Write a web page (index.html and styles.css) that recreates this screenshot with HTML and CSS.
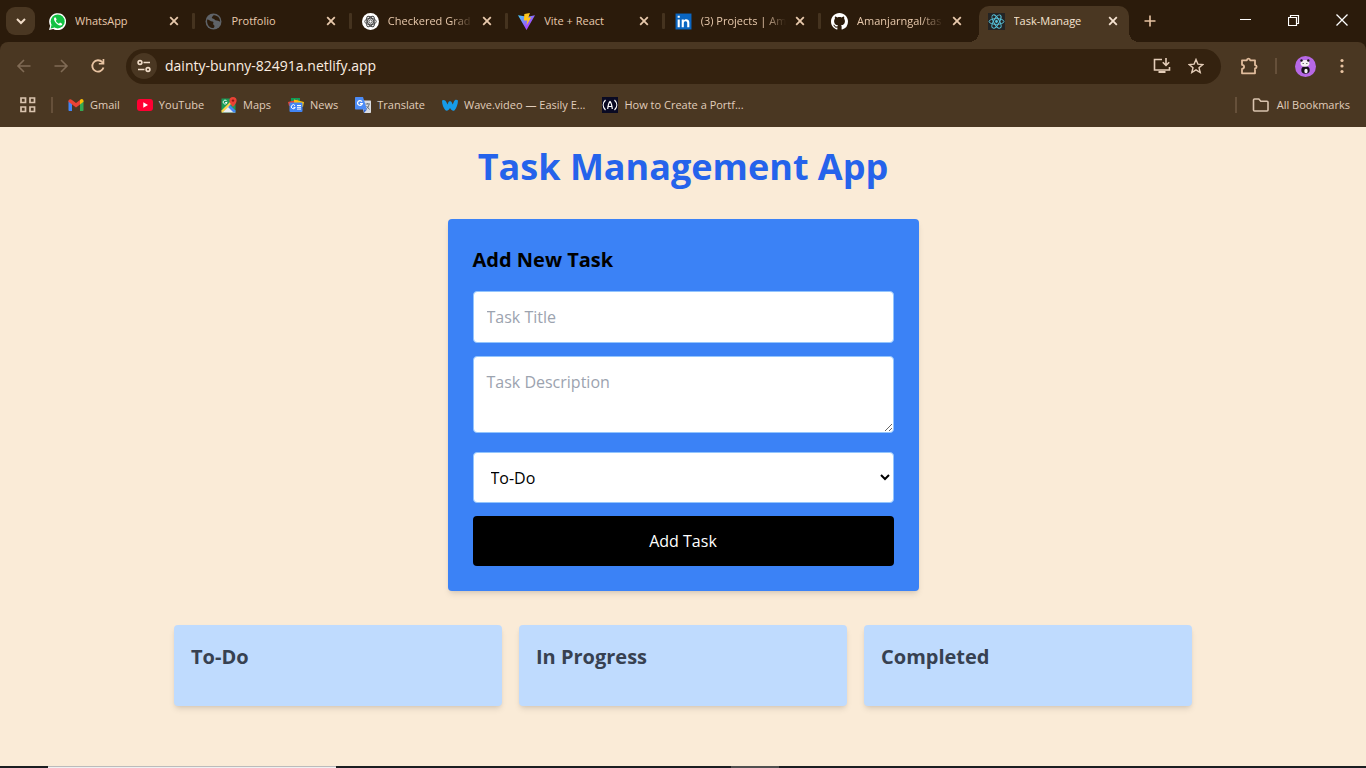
FILE: index.html
```html
<!DOCTYPE html>
<html lang="en">
<head>
<meta charset="utf-8">
<title>Task-Manage</title>
<link rel="stylesheet" href="styles.css">
</head>
<body>
<svg class="defs" aria-hidden="true">
  <symbol id="x" viewBox="0 0 16 16"><path d="M4.2 4.2l7.6 7.6M11.8 4.2l-7.6 7.6" fill="none" stroke="currentColor" stroke-width="1.8"/></symbol>
</svg>
<header class="browser">
  <div class="strip">
    <button class="tab-search" aria-label="Search tabs"><svg width="12" height="12" viewBox="0 0 12 12"><path d="M2 4l4 4 4-4" fill="none" stroke="#f0dcc8" stroke-width="2"/></svg></button>
    <ul class="tabs">
      <li class="tab">
        <svg class="fav" viewBox="0 0 16 16"><path d="M0 16l1.100-4A8 8 0 1 1 4 15z" fill="#fff"/><circle cx="8.200" cy="7.900" r="6.600" fill="#12c143"/><path d="M1.500 14.500l1-3.700 2.700 2.900z" fill="#12c143"/><path d="M5.200 4.200c-2 2 2.500 8 5.800 7.600 1.400-.3 1.600-1.300 1.300-1.800l-1.900-1-1 1.100C8 9.700 6.900 8.600 6.400 7.400l.8-1-.8-2.100z" fill="#fff"/></svg>
        <a class="label" href="#whatsapp">WhatsApp</a><button class="close" aria-label="Close WhatsApp"><svg><use href="#x"/></svg></button></li>
      <li class="tab">
        <svg class="fav" viewBox="0 0 16 16"><circle cx="8" cy="8" r="7.500" fill="#5f6368"/><path d="M2 6c2 0 3 2 5 2 2 .4 0 2 1 3 1.500 1 1 2 0 3.200C4 14 1.500 11 2 6zM8 2c-2 2-2 3-.5 3.200C9 5.500 9 7 11 7s2 1 3.300 1C14 4 11.500 2 8 2z" fill="#2b1b0b"/></svg>
        <a class="label" href="#protfolio">Protfolio</a><button class="close" aria-label="Close Protfolio"><svg><use href="#x"/></svg></button></li>
      <li class="tab">
        <svg class="fav" viewBox="0 0 16 16"><circle cx="8" cy="8" r="8" fill="#fff"/><g fill="none" stroke="#444" stroke-width=".9"><ellipse cx="8" cy="8" rx="5.400" ry="3"/><ellipse cx="8" cy="8" rx="5.400" ry="3" transform="rotate(60 8 8)"/><ellipse cx="8" cy="8" rx="5.400" ry="3" transform="rotate(120 8 8)"/><circle cx="8" cy="8" r="1.600"/></g></svg>
        <a class="label long" href="#gradient">Checkered Grad</a><button class="close" aria-label="Close Checkered Gradient"><svg><use href="#x"/></svg></button></li>
      <li class="tab">
        <svg class="fav" viewBox="0 0 16 16"><defs><linearGradient id="vp" x2="1" y2="1"><stop stop-color="#41d1ff"/><stop offset=".6" stop-color="#9b55fe"/><stop offset="1" stop-color="#bd34fe"/></linearGradient></defs><path d="M0 2l8 14 8-14-7 1.500z" fill="url(#vp)"/><path d="M6 1l5.200-1-1.500 4.500 2.800-.4L8 11.500 8.800 7H5.500z" fill="#ffc61c"/></svg>
        <a class="label" href="#vite">Vite + React</a><button class="close" aria-label="Close Vite + React"><svg><use href="#x"/></svg></button></li>
      <li class="tab">
        <svg class="fav" viewBox="0 0 16 16"><path d="M.5.500h15v15H.500z" fill="#0a66c2"/><path d="M2.500 6h2v7.500h-2zM2.500 2.500h2v2h-2zM6.300 6h2v1c1.200-1.800 5.200-1.600 5.200 2v4.500h-2V9.300c0-2-3.200-2-3.200 0v4.200h-2z" fill="#fff"/></svg>
        <a class="label long" href="#projects">(3) Projects | Am</a><button class="close" aria-label="Close Projects"><svg><use href="#x"/></svg></button></li>
      <li class="tab">
        <svg class="fav" viewBox="0 0 16 16"><path fill="#fff" d="M8 0C3.580 0 0 3.580 0 8c0 3.540 2.290 6.530 5.470 7.590.4.070.55-.17.55-.38 0-.19-.01-.82-.01-1.490-2.010.37-2.530-.49-2.690-.94-.09-.23-.48-.94-.82-1.130-.28-.15-.68-.52-.01-.53.63-.01 1.080.58 1.230.82.72 1.210 1.870.87 2.330.66.07-.52.28-.87.51-1.070-1.780-.2-3.640-.89-3.640-3.950 0-.87.31-1.590.82-2.150-.08-.2-.36-1.020.08-2.120 0 0 .67-.21 2.200.82.64-.18 1.320-.27 2-.27s1.360.09 2 .27c1.530-1.040 2.200-.82 2.200-.82.44 1.100.16 1.920.08 2.120.51.56.82 1.270.82 2.150 0 3.070-1.870 3.750-3.650 3.950.29.25.54.73.54 1.480 0 1.070-.01 1.930-.01 2.200 0 .21.15.46.55.38A8 8 0 0 0 16 8c0-4.420-3.580-8-8-8z"/></svg>
        <a class="label long" href="#github">Amanjarngal/tas</a><button class="close" aria-label="Close Amanjarngal"><svg><use href="#x"/></svg></button></li>
      <li class="tab active">
        <svg class="fav" viewBox="0 0 16 16"><path d="M0 0h16v16H0z" fill="#242424"/><g fill="none" stroke="#58c4dc" stroke-width=".9"><ellipse cx="8" cy="8" rx="7" ry="2.700"/><ellipse cx="8" cy="8" rx="7" ry="2.700" transform="rotate(60 8 8)"/><ellipse cx="8" cy="8" rx="7" ry="2.700" transform="rotate(120 8 8)"/></g><circle cx="8" cy="8" r="1.300" fill="#58c4dc"/></svg>
        <a class="label" href="#task">Task-Manage</a><button class="close" aria-label="Close Task-Manage"><svg><use href="#x"/></svg></button></li>
    </ul>
    <button class="new-tab" aria-label="New tab"><svg width="12" height="12" viewBox="0 0 12 12"><path d="M6 .5v11M.5 6h11" stroke="#e8c3a2" stroke-width="1.600"/></svg></button>
    <div class="window-controls">
      <button aria-label="Minimize"><svg width="12" height="12" viewBox="0 0 12 12"><path d="M0 5.500h11" stroke="#fff"/></svg></button>
      <button aria-label="Restore"><svg width="12" height="12" viewBox="0 0 12 12"><path d="M.5 3.500h8v8h-8zM2.500 3.500v-2h8v8h-2" fill="none" stroke="#fff" stroke-width="1.200"/></svg></button>
      <button aria-label="Close window"><svg width="12" height="12" viewBox="0 0 12 12"><path d="M.5.500l11 11M11.500.500l-11 11" stroke="#fff" stroke-width="1.300"/></svg></button>
    </div>
  </div>
  <div class="panel">
    <nav class="toolbar" aria-label="Navigation">
      <button class="nav dim" aria-label="Back"><svg width="16" height="16" viewBox="0 0 16 16"><path d="M14.500 8H2.500M8 2L2 8l6 6" fill="none" stroke="currentColor" stroke-width="1.600"/></svg></button>
      <button class="nav dim" aria-label="Forward"><svg width="16" height="16" viewBox="0 0 16 16"><path d="M1.500 8h12M8 2l6 6-6 6" fill="none" stroke="currentColor" stroke-width="1.600"/></svg></button>
      <button class="nav" aria-label="Reload"><svg width="16" height="16" viewBox="0 0 16 16"><path d="M13.500 9.500A5.700 5.700 0 1 1 12.300 4.200L13.500 5.500" fill="none" stroke="currentColor" stroke-width="1.800"/><path d="M14.300 1v5.500H8.800V5h3.800V1z" fill="currentColor"/></svg></button>
      <div class="omnibox">
        <button class="site-info" aria-label="Site information"><svg width="14" height="14" viewBox="0 0 14 14"><g fill="none" stroke="#f0dcc8" stroke-width="1.600"><circle cx="3" cy="3.500" r="1.900"/><path d="M6.500 3.500H13M1 10.500h6.500"/><circle cx="11" cy="10.500" r="1.900"/></g></svg></button>
        <input class="url" aria-label="Address" value="dainty-bunny-82491a.netlify.app">
        <button class="omni-btn" aria-label="Install"><svg width="18" height="16" viewBox="0 0 18 16"><path d="M9 1.500H1.500v10.500h15V9" fill="none" stroke="currentColor" stroke-width="1.600"/><path d="M5.500 13h7v2h-7z" fill="currentColor"/><path d="M13 0v7M9.800 4.200L13 7.400l3.200-3.200" fill="none" stroke="currentColor" stroke-width="1.600"/></svg></button>
        <button class="omni-btn" aria-label="Bookmark"><svg width="16" height="16" viewBox="0 0 16 16"><path d="M8 1.500l1.900 4.600 4.900.4-3.800 3.200 1.200 4.800L8 11.900l-4.200 2.600L5 9.700 1.200 6.500l4.900-.4z" fill="none" stroke="currentColor" stroke-width="1.400"/></svg></button>
      </div>
      <button class="ext" aria-label="Extensions"><svg width="18" height="18" viewBox="0 0 18 18"><path d="M2 3.300h4.800c.2-2.300 3.200-2.300 3.400 0H15v4.800c2.200.2 2.200 3.200 0 3.400v4.800H2v-4.500c2.800-.2 2.800-3.800 0-4z" fill="none" stroke="#e2bd9d" stroke-width="1.800" stroke-linejoin="round"/></svg></button>
      <span class="rule"></span>
      <button class="avatar" aria-label="Profile"><svg width="21" height="21" viewBox="0 0 21 21"><circle cx="10.500" cy="10.500" r="10.500" fill="#b768e6"/><ellipse cx="10.500" cy="14" rx="4.200" ry="3.800" fill="#17131a"/><ellipse cx="11" cy="15" rx="1.700" ry="2.200" fill="#f5f1f5"/><ellipse cx="10" cy="7.300" rx="4.400" ry="3.400" fill="#f5f1f5"/><circle cx="6.500" cy="4.500" r="1.200" fill="#17131a"/><circle cx="13.300" cy="4.500" r="1.200" fill="#17131a"/><path d="M7.500 7.500h1.500M11 7.500h1.500" stroke="#777"/></svg></button>
      <button class="menu" aria-label="Menu"><svg width="4" height="16" viewBox="0 0 4 16"><g fill="#e8c3a2"><circle cx="2" cy="2.500" r="1.600"/><circle cx="2" cy="8" r="1.600"/><circle cx="2" cy="13.500" r="1.600"/></g></svg></button>
    </nav>
    <nav class="bookmarks" aria-label="Bookmarks">
      <button class="apps" aria-label="Apps"><svg width="16" height="16" viewBox="0 0 16 16"><path d="M1 1h4.500v4.500H1zM10 1h4.500v4.500H10zM1 10h4.500v4.500H1zM10 10h4.500v4.500H10z" fill="none" stroke="#d9c3ae" stroke-width="1.700"/></svg></button>
      <span class="rule"></span>
      <div class="links">
        <a href="#gmail"><svg viewBox="0 0 16 16"><path d="M.5 4v9c0 .6.4 1 1 1H4V6.500z" fill="#4285f4"/><path d="M12 6.500V14h2.500c.6 0 1-.4 1-1V4z" fill="#34a853"/><path d="M12 3v4.500l3.500-2.700V4c0-1.800-2-2.700-3.500-1z" fill="#fbbc04"/><path d="M.5 4v.8L8 10.600l4-3V3L8 6 4 3C2.500 1.500.5 2.300.5 4z" fill="#ea4335"/></svg>Gmail</a>
        <a href="#youtube"><svg viewBox="0 0 16 16"><rect y="2" width="16" height="12" rx="3" fill="#ff0033"/><path d="M6.300 5.300L11 8l-4.700 2.700z" fill="#fff"/></svg>YouTube</a>
        <a href="#maps"><svg viewBox="0 0 16 16"><path d="M.5 1.500h14v14H.500z" fill="#1a9b58"/><path d="M1 15.500l7-7 6.500 7z" fill="#e9edf2"/><path d="M7 10l2-2 5.500 5.500v2h-2z" fill="#4285f4"/><path d="M.5 13.500L11 3l1.500 1.500-11 11h-1z" fill="#ffd04b"/><path d="M12 0a3.600 3.600 0 0 0-3.600 3.600C8.400 6.500 12 10 12 10s3.600-3.500 3.600-6.400A3.600 3.600 0 0 0 12 0z" fill="#e94235"/><circle cx="12" cy="3.600" r="1.200" fill="#8b1b13"/><path d="M5.800 4.200a1.900 1.900 0 1 0 .2 1.300H4.200" fill="none" stroke="#fff"/></svg>Maps</a>
        <a href="#news"><svg viewBox="0 0 16 16"><path d="M3 1h9v6H3z" fill="#0c9d58"/><path d="M0 5l10-2.500L11 8 1 9z" fill="#ea4335"/><path d="M6 2.500L16 5l-1 5-9-2z" fill="#ffc107"/><rect x="1.500" y="5.500" width="13" height="9.500" rx="1" fill="#4285f4"/><path d="M7 8.700a2 2 0 1 0 .2 1.700H5.500M9 8.500h4M9 10.300h4M9 12.100h4" fill="none" stroke="#fff"/></svg>News</a>
        <a href="#translate"><svg viewBox="0 0 16 16"><path d="M5.500 3.500H15c.6 0 1 .4 1 1V15c0 .6-.4 1-1 1H9z" fill="#dadce0"/><path d="M1 0h7l4 12.500H1c-.6 0-1-.4-1-1V1c0-.6.400-1 1-1z" fill="#4c8bf5"/><path d="M8.500 12.500H12L9 16z" fill="#3367d6"/><path d="M7 4.700A2.400 2.400 0 1 0 7.300 6.600H5" fill="none" stroke="#fff" stroke-width="1.200"/><path d="M10.500 7H15M12.700 6v1M14 7.500c-.3 2-1.500 3.500-2.500 4M11.500 9l3 3.500" fill="none" stroke="#687078"/></svg>Translate</a>
        <a href="#wave"><svg viewBox="0 0 16 16"><path d="M0 3.500c1.500-1.200 3.500-.5 4.300 1.500L5.500 7.500l.8-2c.6-1.800 2.800-1.800 3.500 0l.9 2L12 4.500c.8-2 2.500-2.200 4-1-.2 4-1.400 7.500-3.600 10-1.600.8-3-.2-4.400-2.500-1.300 2.300-3 3.300-4.600 2.300C1.400 11 .1 7.500 0 3.500z" fill="#169be8"/></svg>Wave.video — Easily E...</a>
        <a href="#howto"><svg viewBox="0 0 16 16"><path d="M0 0h16v16H0z" fill="#0a0a23"/><path d="M3.500 3C.5 6 .5 10 3.500 13M12.500 3c3 3 3 7 0 10M5.700 12C6 9 6.500 6 8 4.500 9.500 6 10 9 10.300 12M6.300 9.500h3.400" fill="none" stroke="#fff" stroke-width="1.200"/></svg>How to Create a Portf...</a>
      </div>
      <span class="rule"></span>
      <button class="all"><svg viewBox="0 0 18 16" width="18" height="16"><path d="M1.500 13V3c0-.6.400-1 1-1h4.300l2 2.200H15c.6 0 1 .4 1 1V13c0 .6-.4 1-1 1H2.500c-.6 0-1-.4-1-1z" fill="none" stroke="#d9c3ae" stroke-width="1.600"/></svg>All Bookmarks</button>
    </nav>
  </div>
</header>
<main class="page">
  <h1>Task Management App</h1>
  <form class="task-form">
    <h2>Add New Task</h2>
    <input class="field title" type="text" placeholder="Task Title" aria-label="Task Title">
    <textarea class="field area" placeholder="Task Description" aria-label="Task Description"></textarea>
    <select class="field status" aria-label="Status"><option>To-Do</option><option>In Progress</option><option>Completed</option></select>
    <button class="submit" type="button">Add Task</button>
  </form>
  <div class="board">
    <section class="column"><h2>To-Do</h2></section>
    <section class="column"><h2>In Progress</h2></section>
    <section class="column"><h2>Completed</h2></section>
  </div>
</main>
<footer class="taskbar"><span class="start"></span><span class="search"></span><span class="space"></span><span class="running"></span><span class="rest"></span></footer>
</body>
</html>
```
FILE: styles.css
```css
* { box-sizing: border-box; }
body {
  margin: 0;
  min-height: 100vh;
  display: flex;
  flex-direction: column;
  background: #faebd7;
  font-family: "Open Sans", "Noto Sans", sans-serif;
}
h1, h2, ul { margin: 0; padding: 0; }
button { border: 0; padding: 0; background: none; font: inherit; color: inherit; display: flex; align-items: center; justify-content: center; flex: none; }
a { color: inherit; text-decoration: none; }
svg { flex: none; display: block; }
.defs { position: absolute; width: 0; height: 0; }

.browser { background: #2b1b0b; color: #e8c9ac; font-size: 11px; }
.strip { display: flex; height: 42px; }
.tab-search { width: 29px; height: 28px; margin: 7px 0 0 6px; border-radius: 9px; background: #4a3722; }
.tabs { display: flex; flex: 0 1 1095px; min-width: 0; margin-left: 5px; list-style: none; }
.tab { position: relative; flex: 1 1 0; min-width: 0; display: flex; align-items: center; margin-top: 6px; padding: 0 8px 6px 9px; }
.tab + .tab:not(.active)::before { content: ""; position: absolute; left: -4px; top: 7px; width: 3px; height: 16px; border-radius: 1px; background: #45331f; }
.fav { width: 17px; height: 17px; }
.label { flex: 1; min-width: 0; margin: 0 4px 0 9px; overflow: hidden; white-space: nowrap; line-height: 16px; }
.long { -webkit-mask-image: linear-gradient(to right, #000 72%, transparent 98%); mask-image: linear-gradient(to right, #000 72%, transparent 98%); }
.close { width: 16px; height: 16px; margin-right: 6px; }
.close svg { width: 16px; height: 16px; }
.active { margin-right: 6px; padding-right: 2px; border-radius: 10px 10px 0 0; background: #4a3722; color: #f6e3d1; }
.active::before, .active::after { content: ""; position: absolute; bottom: 0; width: 10px; height: 10px; }
.active::before { left: -10px; background: radial-gradient(circle at 0 0, transparent 10px, #4a3722 10px); }
.active::after { right: -10px; background: radial-gradient(circle at 100% 0, transparent 10px, #4a3722 10px); }
.new-tab { width: 30px; height: 28px; margin-top: 7px; }
.window-controls { display: flex; margin-left: auto; }
.window-controls button { width: 48px; height: 40px; }

.panel { background: #4a3722; border-radius: 8px 8px 0 0; }
.toolbar { display: flex; align-items: center; height: 48px; padding: 0 14px 0 6px; }
.nav { width: 36px; height: 36px; color: #e8c3a2; }
.nav + .nav { margin-left: 1px; }
.dim { color: #806b55; }
.omnibox { flex: 1; min-width: 0; display: flex; align-items: center; height: 35px; margin-left: 10px; padding: 0 17px 0 5px; border-radius: 18px; background: #34220f; }
.site-info { width: 26px; height: 26px; border-radius: 50%; background: #4a3722; }
.url { flex: 1; min-width: 0; margin-left: 8px; padding: 0; border: 0; outline: 0; background: none; color: #fbeee2; font: 14px/20px "Open Sans", "Noto Sans", sans-serif; }
.omni-btn { margin-left: 17px; color: #e4cdb8; }
.ext { margin-left: 19px; }
.rule { width: 2px; height: 16px; background: #66503a; flex: none; }
.toolbar .rule { margin: 0 18px 0 17px; }
.menu { width: 4px; margin: 0 8px 0 24px; }

.bookmarks { display: flex; align-items: center; height: 37px; padding: 0 16px 8px 20px; color: #e0cdbb; }
.bookmarks .rule { margin: 0 15px; }
.links { flex: 1; min-width: 0; display: flex; gap: 17px; overflow: hidden; white-space: nowrap; }
.links a { display: flex; align-items: center; gap: 6px; line-height: 16px; }
.links svg { width: 16px; height: 16px; }
.all { gap: 7px; }

.page { flex: 1; padding: 15px 16px; color: #000; }
h1 { text-align: center; font-size: 36px; line-height: 50px; color: #2563eb; }
h2 { font-size: 20px; line-height: 30px; }
.task-form { width: 100%; max-width: 471px; margin: 27px auto 34px; padding: 26px 25px 25px; display: flex; flex-direction: column; border-radius: 4px; background: #3b82f6; box-shadow: 0 4px 6px -1px rgb(0 0 0 / .1), 0 2px 4px -2px rgb(0 0 0 / .1); }
.field { width: 100%; height: 51px; margin: 0 0 13px; padding: 13px; border: 1px solid #93c5fd; border-radius: 4px; background: #fff; color: #000; font: 16px/25px "Open Sans", "Noto Sans", sans-serif; }
.field::placeholder { color: #9ca3af; opacity: 1; }
.task-form h2 { margin-bottom: 16px; }
.title { height: 52px; }
.area { height: 77px; margin-bottom: 19px; }
.submit { height: 50px; border-radius: 4px; background: #000; color: #fff; font-size: 16px; }
.board { display: grid; grid-template-columns: repeat(3, 1fr); gap: 17px; max-width: 1018px; margin: 0 auto; }
.column { min-height: 81px; padding: 17px; border-radius: 4px; background: #bfdbfe; color: #374151; box-shadow: 0 4px 6px -1px rgb(0 0 0 / .1), 0 2px 4px -2px rgb(0 0 0 / .1); }

.taskbar { display: flex; height: 2px; background: #1b1e21; }
.start { width: 48px; }
.search { width: 288px; background: #f0f0f0; border-top: 1px solid #bbb; }
.space { flex: 395; }
.running { width: 48px; background: #505050; }
.rest { flex: 587; }
```
